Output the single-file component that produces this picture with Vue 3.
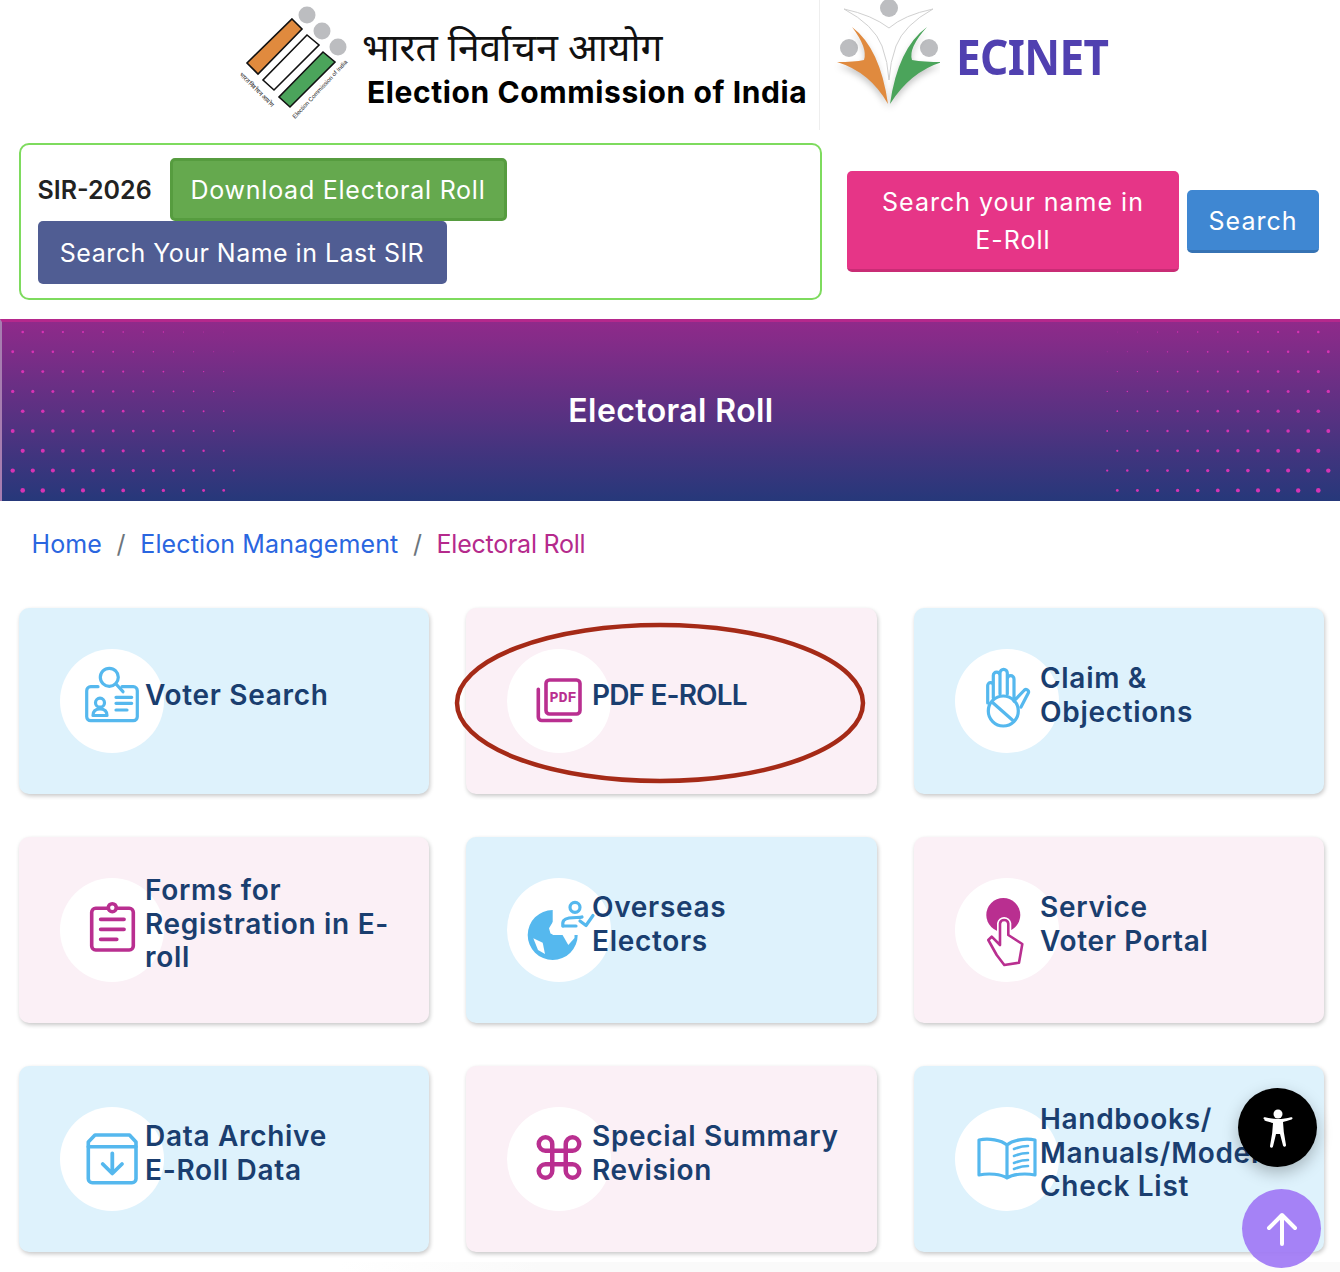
<template>
  <div class="page">
    <header class="top">
      <div class="eci">
        <svg class="eci-logo" viewBox="0 0 120 130" width="120" height="130">
          <circle cx="75" cy="15" r="8.5" fill="#bcbdc0"/>
          <circle cx="90" cy="31" r="8.5" fill="#bcbdc0"/>
          <circle cx="106" cy="47" r="8.5" fill="#bcbdc0"/>
          <polygon points="60,19 70,29 26,74 15,63" fill="#e08a3e" stroke="#111" stroke-width="1.6"/>
          <polygon points="75,35 87,45 42,90 31,80" fill="#fff" stroke="#111" stroke-width="1.6"/>
          <polygon points="91,52 103,62 58,107 47,97" fill="#4ba45b" stroke="#111" stroke-width="1.6"/>
          <text class="logo-mini" transform="translate(7,75) rotate(45)">भारत निर्वाचन आयोग</text>
          <text class="logo-mini" transform="translate(63,119) rotate(-47)">Election Commission of India</text>
        </svg>
        <div class="eci-text">
          <div class="hindi">भारत निर्वाचन आयोग</div>
          <div class="eng">Election Commission of India</div>
        </div>
      </div>
      <div class="ecinet">
        <svg class="net-logo" viewBox="0 0 120 130" width="120" height="130">
          <path d="M24 9 Q52 15 69 28 Q84 15 113 9 Q84 25 76 46 Q70 62 69 80 Q68 62 62 46 Q54 25 24 9Z" fill="#fff" stroke="#d0d0d0" stroke-width="1"/>
          <circle cx="69" cy="8" r="9" fill="#bcbdc0"/>
          <circle cx="29" cy="48" r="9" fill="#bcbdc0"/>
          <circle cx="109" cy="48" r="9" fill="#bcbdc0"/>
          <g class="swoosh">
            <path d="M32 27 Q60 48 68 104 Q50 72 17 62 Q34 62 44 60 Q48 48 32 27Z" fill="#e08a3e"/>
            <path d="M107 27 Q78 48 70 104 Q90 72 122 62 Q104 62 92 60 Q88 48 107 27Z" fill="#4ba45b"/>
          </g>
        </svg>
        <span class="net-name">ECINET</span>
      </div>
    </header>

    <section class="actions">
      <div class="sir-box">
        <div class="sir-row">
          <span class="sir-label">SIR-2026</span>
          <a class="btn btn-green">Download Electoral Roll</a>
        </div>
        <div class="sir-row">
          <a class="btn btn-slate">Search Your Name in Last SIR</a>
        </div>
      </div>
      <div class="search-side">
        <a class="btn btn-pink">Search your name in<br>E-Roll</a>
        <a class="btn btn-blue">Search</a>
      </div>
    </section>

    <section class="banner">
      <svg class="dots" viewBox="0 0 1340 182" width="1340" height="182">
        <circle v-for="(d, i) in dots" :key="i" :cx="d.x" :cy="d.y" :r="d.r" fill="#d733b4"/>
      </svg>
      <h1>Electoral Roll</h1>
    </section>

    <nav class="crumbs">
      <a>Home</a><span class="sep">/</span>
      <a>Election Management</a><span class="sep">/</span>
      <span class="here">Electoral Roll</span>
    </nav>

    <section class="grid">
      <div v-for="card in cards" :key="card.icon" class="card" :class="card.tone">
        <div class="disc">
          <svg viewBox="0 0 104 104" width="104" height="104" fill="none" :stroke="card.tone === 'blue' ? '#55b8ee' : '#b92f90'" stroke-width="3.2" stroke-linecap="round" stroke-linejoin="round">
            <g v-if="card.icon === 'voter'">
              <circle cx="49.3" cy="28.3" r="9"/>
              <path d="M56 35 L63 42.7"/>
              <path d="M38 37.7H30.7a4 4 0 0 0-4 4V67.7a4 4 0 0 0 4 4H73.3a4 4 0 0 0 4-4V41.7a4 4 0 0 0-4-4H62"/>
              <circle cx="40" cy="53.7" r="4.5"/>
              <path d="M33 66.500c0-4 2.500-6.500 7-6.500s7 2.500 7 6.500Z"/>
              <path d="M56 48.300H71.700M56 54.300H71.700M56 61H67"/>
            </g>
            <g v-else-if="card.icon === 'pdf'" stroke-width="3.6">
              <rect x="39" y="31" width="34" height="34" rx="3.500"/>
              <path d="M31.300 40.300V68a3.500 3.500 0 0 0 3.500 3.500H63.700"/>
              <text class="pdf-mark" x="56" y="53">PDF</text>
            </g>
            <g v-else-if="card.icon === 'hand'">
              <path d="M32.700 54V36.500a2.800 2.800 0 0 1 5.600 0V49M38.300 44V26.500a3.300 3.300 0 0 1 6.700 0V45M45 40V24a3.600 3.600 0 0 1 7.300 0V45M52.300 44V30a3.300 3.300 0 0 1 6.700 0V50M59 52l10-10.500a2.500 2.500 0 0 1 4.300 2.500L66 58"/>
              <circle cx="48.300" cy="62" r="15"/>
              <path d="M37 53 58.500 72"/>
            </g>
            <g v-else-if="card.icon === 'form'" stroke-width="3.6">
              <path d="M47.500 30.300H35.700a4 4 0 0 0-4 4V68a4 4 0 0 0 4 4H69.300a4 4 0 0 0 4-4V34.300a4 4 0 0 0-4-4H57"/>
              <circle cx="52.300" cy="29.700" r="4"/>
              <path d="M40.700 41.300H64M40.700 51.300H64M40.700 61.300H56.700" stroke-width="3.800"/>
            </g>
            <g v-else-if="card.icon === 'globe'">
              <path d="M45.700 32A25 25 0 1 0 70.700 57H45.700Z" fill="#55b8ee" stroke="none"/>
              <path d="M47 30V42L42 50.300 43.500 55.500 47 57Z" fill="#fff" stroke="none"/>
              <path d="M55 56 61.300 67 67.500 60V56Z" fill="#fff" stroke="none"/>
              <path d="M26.300 60.300 35.700 64.700 38 76 31 72Z" fill="#fff" stroke="none"/>
              <circle cx="68" cy="29.300" r="5"/>
              <path d="M56 48c-1-5 1-7 6-8 5-1 11 0 13-1"/>
              <path d="M56 48H69"/>
              <path d="M73 43l6 4.500 7-10"/>
            </g>
            <g v-else-if="card.icon === 'service'">
              <circle cx="48.300" cy="37" r="17" fill="#b92f90" stroke="none"/>
              <path d="M45 67V45.500a4.200 4.200 0 0 1 8.300 0V57L67.300 66 64 84.700 49.300 87 41.700 77 33.300 62l3.400-3.300Z" fill="#fff" stroke="#fff" stroke-width="6"/>
              <path d="M45 67V45.500a4.200 4.200 0 0 1 8.300 0V57L67.300 66 64 84.700 49.300 87 41.700 77 33.300 62l3.400-3.300Z" fill="#fff" stroke-width="2.600"/>
            </g>
            <g v-else-if="card.icon === 'archive'" stroke-width="3.6">
              <path d="M35 28H69.500L76 35V71.700a4 4 0 0 1-4 4H32.300a4 4 0 0 1-4-4V35Z"/>
              <path d="M28.300 39.700H76"/>
              <path d="M52.300 46.300V66.300M42.700 57l9.600 9.500L62 57" stroke-width="3.800"/>
            </g>
            <g v-else-if="card.icon === 'command'" transform="translate(25 23.500) scale(2.250)" stroke-width="2">
              <path d="M15 6v12a3 3 0 1 0 3-3H6a3 3 0 1 0 3 3V6a3 3 0 1 0-3 3h12a3 3 0 1 0-3-3"/>
            </g>
            <g v-else>
              <path d="M52 38C46 33 34 31 24 33V68C34 66 46 67 52 71 58 67 70 66 80 68V33C70 31 58 33 52 38V71"/>
              <path d="M59 42C64 40 68 39 73 39M59 49C64 47 68 46 73 46M59 56C64 54 68 53 73 53M59 62C64 60 68 59 73 59" stroke-width="2.600"/>
            </g>
          </svg>
        </div>
        <div class="label" :class="{ caps: card.icon === 'pdf' }">
          <div v-for="line in card.lines" :key="line">{{ line }}</div>
        </div>
      </div>
      <svg class="ring" viewBox="0 0 414 164" width="414" height="164">
        <ellipse cx="207" cy="82" rx="203" ry="78" fill="none" stroke="#a52a17" stroke-width="4.500"/>
      </svg>
    </section>
    <div class="foot"></div>

    <button class="fab fab-access" aria-label="Accessibility">
      <svg viewBox="0 0 40 40" width="40" height="40" fill="#fff">
        <circle cx="20" cy="6" r="4.500"/>
        <path d="M6.500 11.500c-1.800-.8-1 -2.700.6-2.300C11 10.300 15.500 11 20 11s9-.7 12.900-1.800c1.600-.4 2.400 1.500.6 2.300-3.400 1.300-6.500 2-8.500 2.400l.8 10 2.200 13c.3 1.900-2.500 2.500-3 .6L22 26h-4l-3 12.500c-.5 1.900-3.300 1.300-3-.6l2.200-13 .8-10c-2-.4-5.100-1.100-8.500-2.400Z"/>
      </svg>
    </button>
    <button class="fab fab-up" aria-label="Back to top">
      <svg viewBox="0 0 40 40" width="40" height="40" fill="none" stroke="#fff" stroke-width="4" stroke-linecap="round" stroke-linejoin="round">
        <path d="M20 35V7M7 19 20 6l13 13"/>
      </svg>
    </button>
  </div>
</template>

<script setup>
const cards = [
  { icon: 'voter', tone: 'blue', lines: ['Voter Search'] },
  { icon: 'pdf', tone: 'rose', lines: ['PDF E-ROLL'] },
  { icon: 'hand', tone: 'blue', lines: ['Claim &', 'Objections'] },
  { icon: 'form', tone: 'rose', lines: ['Forms for', 'Registration in E-', 'roll'] },
  { icon: 'globe', tone: 'blue', lines: ['Overseas', 'Electors'] },
  { icon: 'service', tone: 'rose', lines: ['Service', 'Voter Portal'] },
  { icon: 'archive', tone: 'blue', lines: ['Data Archive', 'E-Roll Data'] },
  { icon: 'command', tone: 'rose', lines: ['Special Summary', 'Revision'] },
  { icon: 'book', tone: 'blue', lines: ['Handbooks/', 'Manuals/Model', 'Check List'] },
]

// two mirrored halftone patches at the sides of the banner
const dots = []
for (let row = 0; row < 9; row++) {
  const y = 13 + row * 19.8
  const even = row % 2 === 0
  const cols = even ? 11 : 12
  for (let col = 0; col < cols; col++) {
    const x = (even ? 22.7 : 12.7) + col * 20.1
    const fade = 1 - col / 12
    const r = Math.max(0.25, row * 0.13 + fade * 1.15 + 0.15)
    dots.push({ x, y, r })
    dots.push({ x: 1341 - x, y, r })
  }
}
</script>

<style scoped>
.page {
  position: relative;
  width: 1340px;
  height: 1272px;
  overflow: hidden;
  background: #fff;
  font-family: Inter, "Open Sans", sans-serif;
}

.top {
  display: flex;
  height: 130px;
}
.eci {
  display: flex;
  width: 820px;
  box-sizing: border-box;
  padding-left: 232px;
  border-right: 1px solid #eee;
}
.eci-logo {
  overflow: visible;
}
.eci-text {
  padding-top: 24px;
}
.hindi {
  font-family: "Noto Sans Devanagari", "Noto Serif Devanagari", "Noto Sans", sans-serif;
  font-size: 39px;
  line-height: 56px;
  color: #111;
  margin-left: 10px;
  white-space: nowrap;
}
.eng {
  font-size: 30px;
  font-weight: 700;
  line-height: 24px;
  color: #000;
  margin-left: 15px;
  letter-spacing: .6px;
  white-space: nowrap;
}
.logo-mini {
  font-size: 6px;
  fill: #222;
  stroke: none;
  font-family: "Liberation Sans", sans-serif;
}
.ecinet {
  display: flex;
}
.swoosh {
  filter: drop-shadow(0 4px 3px rgba(0, 0, 0, .22));
}
.net-name {
  font-family: "Noto Sans", sans-serif;
  font-size: 49px;
  font-weight: 700;
  color: #5040b0;
  line-height: 113px;
  margin-left: 16px;
  letter-spacing: -.7px;
  transform: scaleX(.9);
  transform-origin: left center;
}

.actions {
  display: flex;
  align-items: center;
  margin-top: 13px;
  padding-left: 19px;
}
.sir-box {
  box-sizing: border-box;
  width: 803px;
  height: 157px;
  border: 2.5px solid #7edb5e;
  border-radius: 10px;
  padding: 12.5px 16.5px;
}
.sir-row {
  display: flex;
  align-items: center;
}
.sir-label {
  font-size: 25px;
  font-weight: 600;
  color: #222;
  width: 132px;
  padding-top: 2px;
  white-space: nowrap;
}
.btn {
  box-sizing: border-box;
  display: flex;
  align-items: center;
  justify-content: center;
  text-align: center;
  color: #fff;
  font-size: 25px;
  line-height: 38px;
  border-radius: 5px;
  padding-top: 2px;
  white-space: nowrap;
}
.btn-green {
  width: 337px;
  height: 63px;
  background: #65a94e;
  border: 3px solid #569c3f;
  letter-spacing: .75px;
}
.btn-slate {
  width: 409px;
  height: 63px;
  background: #505d93;
  letter-spacing: .48px;
}
.search-side {
  display: flex;
  align-items: center;
  gap: 8px;
  margin-left: 25px;
}
.btn-pink {
  width: 332px;
  height: 101px;
  background: #e63587;
  border-bottom: 3px solid #c92c75;
  letter-spacing: 1px;
}
.btn-blue {
  width: 132px;
  height: 63px;
  background: #3f87d2;
  border-bottom: 3px solid #3673b4;
  letter-spacing: 1px;
}

.banner {
  position: relative;
  margin-top: 19px;
  height: 182px;
  box-sizing: border-box;
  display: flex;
  align-items: center;
  justify-content: center;
  background: linear-gradient(#8f2a8a, #26387a);
  border-top: 3px solid #b5288c;
  border-left: 2px solid #a77db0;
}
.dots {
  position: absolute;
  left: -2px;
  top: -3px;
}
.banner h1 {
  position: relative;
  margin: 0 0 2px;
  font-size: 32px;
  font-weight: 600;
  letter-spacing: .4px;
  color: #fff;
}

.crumbs {
  display: flex;
  align-items: center;
  height: 86px;
  padding-left: 31.5px;
  font-size: 25px;
  letter-spacing: .13px;
  color: #2a66e0;
}
.sep {
  color: #6c757d;
  margin: 0 14.5px;
}
.here {
  color: #b52a8c;
  letter-spacing: -.25px;
}

.grid {
  position: relative;
  display: grid;
  grid-template-columns: 410px 411px 410px;
  grid-auto-rows: 186px;
  column-gap: 37px;
  row-gap: 43px;
  margin-top: 21px;
  padding-left: 19px;
}
.card {
  display: flex;
  align-items: center;
  box-sizing: border-box;
  padding-left: 41px;
  border-radius: 10px;
  box-shadow: 1px 2px 4px rgba(0, 0, 0, .22);
}
.card.blue {
  background: #def2fc;
}
.card.rose {
  background: #fbf0f6;
}
.disc {
  flex: none;
  width: 104px;
  height: 104px;
  border-radius: 50%;
  background: #fff;
}
.pdf-mark {
  font-family: "Liberation Mono", monospace;
  font-size: 15px;
  font-weight: 700;
  text-anchor: middle;
  fill: #b92f90;
  stroke: none;
}
.label {
  position: relative;
  margin-left: -19px;
  margin-bottom: 11px;
  font-size: 28px;
  font-weight: 600;
  letter-spacing: .7px;
  line-height: 33.5px;
  color: #1a3e6f;
  white-space: nowrap;
}
.label.caps {
  letter-spacing: -.85px;
}
.ring {
  position: absolute;
  left: 453px;
  top: 13px;
  pointer-events: none;
}
.foot {
  position: absolute;
  left: 340px;
  right: 0;
  top: 1262px;
  bottom: 0;
  background: linear-gradient(90deg, #fff, #fafafa 20%);
}

.fab {
  position: absolute;
  width: 79px;
  height: 79px;
  padding: 0;
  border: 0;
  border-radius: 50%;
  display: flex;
  align-items: center;
  justify-content: center;
}
.fab-access {
  left: 1238px;
  top: 1088px;
  background: #000;
  box-shadow: 0 6px 16px rgba(0, 0, 0, .25);
}
.fab-up {
  left: 1242px;
  top: 1189px;
  background: rgba(160, 120, 245, .92);
}
</style>

<style>
html, body {
  margin: 0;
  overflow: hidden;
}
</style>
